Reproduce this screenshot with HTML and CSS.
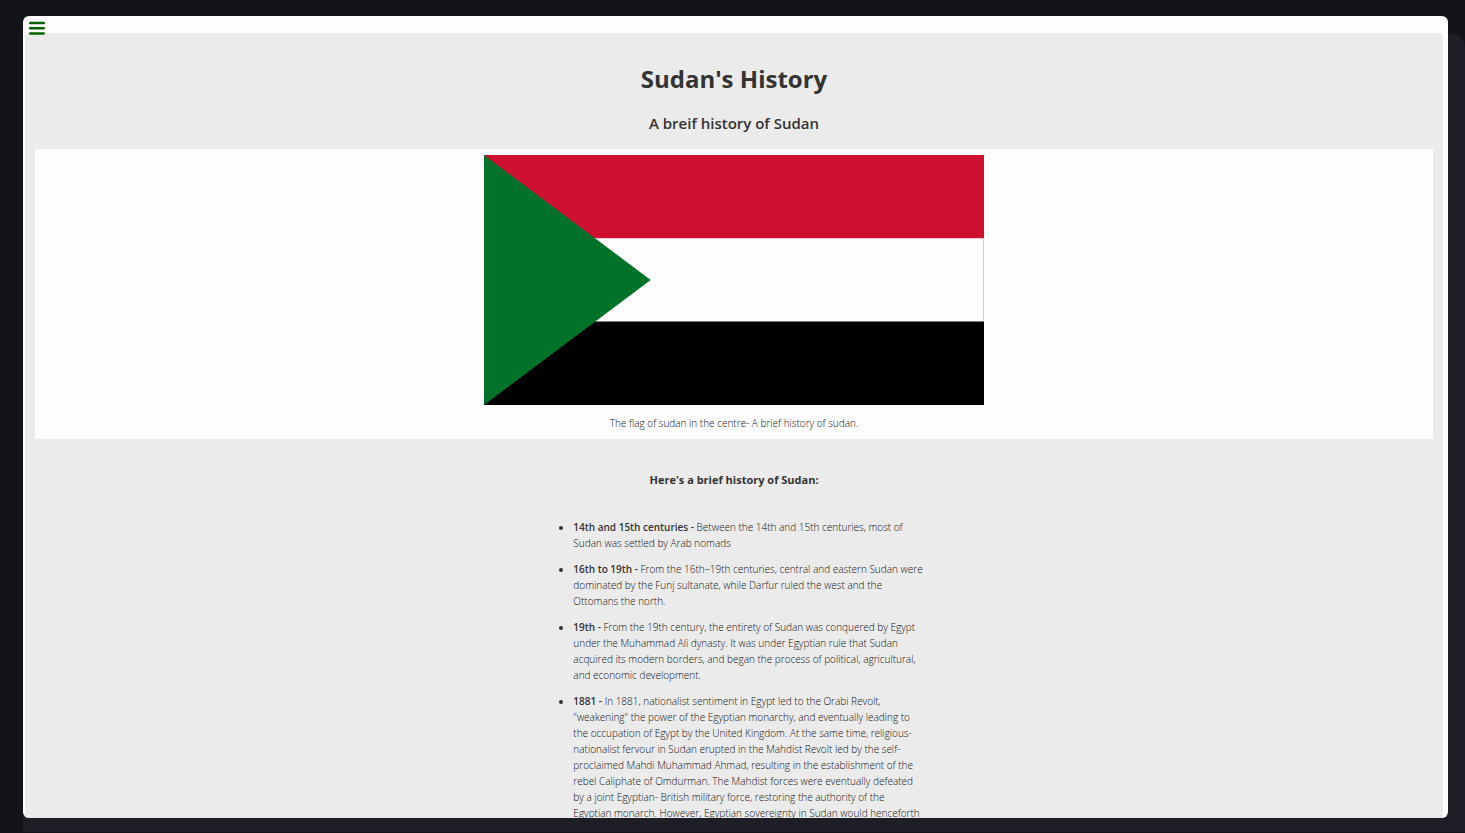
FILE: index.html
```html
<!DOCTYPE html>
<html lang="en">
<head>
<meta charset="utf-8">
<title>Sudan's History</title>
<meta name="viewport" content="width=device-width, initial-scale=1">
<link rel="stylesheet" href="styles.css">
</head>
<body>
<div class="backdrop">
  <div class="window">
    <button class="menu-button" type="button" aria-label="Menu">
      <svg class="menu-icon" viewBox="0 0 16 14" aria-hidden="true">
        <path d="M1.2 2.1h13.6M1.2 7.3h13.6M1.2 12.4h13.6"/>
      </svg>
    </button>
    <main class="page">
      <h1 class="title">Sudan's History</h1>
      <h2 class="subtitle">A breif history of Sudan</h2>
      <figure class="figure">
        <svg class="flag" viewBox="0 0 500 250" role="img" aria-label="Flag of Sudan">
          <path fill="#d01030" d="M0 0h500v83.5H0z"/>
          <path fill="#fdfdfd" d="M0 83.5h500v83H0z"/>
          <path fill="#cfcfcf" d="M499 84h1v82h-1z"/>
          <path fill="#000" d="M0 166.5h500V250H0z"/>
          <path fill="#007229" d="M0 0l166.7 125L0 250z"/>
        </svg>
        <figcaption class="caption">The flag of sudan in the centre- A brief history of sudan.</figcaption>
      </figure>
      <h3 class="heading">Here's a brief history of Sudan:</h3>
      <ul class="timeline">
        <li><strong>14th and 15th centuries -</strong> Between the 14th and 15th centuries, most of<br>Sudan was settled by Arab nomads</li>
        <li><strong>16th to 19th -</strong> From the 16th–19th centuries, central and eastern Sudan were<br>dominated by the Funj sultanate, while Darfur ruled the west and the<br>Ottomans the north.</li>
        <li><strong>19th -</strong> From the 19th century, the entirety of Sudan was conquered by Egypt<br>under the Muhammad Ali dynasty. It was under Egyptian rule that Sudan<br>acquired its modern borders, and began the process of political, agricultural,<br>and economic development.</li>
        <li><strong>1881 -</strong> In 1881, nationalist sentiment in Egypt led to the Orabi Revolt,<br>"weakening" the power of the Egyptian monarchy, and eventually leading to<br>the occupation of Egypt by the United Kingdom. At the same time, religious-<br>nationalist fervour in Sudan erupted in the Mahdist Revolt led by the self-<br>proclaimed Mahdi Muhammad Ahmad, resulting in the establishment of the<br>rebel Caliphate of Omdurman. The Mahdist forces were eventually defeated<br>by a joint Egyptian- British military force, restoring the authority of the<br>Egyptian monarch. However, Egyptian sovereignty in Sudan would henceforth</li>
      </ul>
    </main>
  </div>
</div>
</body>
</html>
```
FILE: styles.css
```css
* {
  box-sizing: border-box;
}

body {
  margin: 0;
  height: 100vh;
  padding: 34px 0 1px 23px;
  background: #131418;
  color: #111;
  font-family: "Open Sans", "Noto Sans", sans-serif;
  font-size: 10px;
  font-weight: 300;
  line-height: 16px;
  overflow: hidden;
}

.backdrop {
  display: flex;
  height: 100%;
  padding: 0 17px 14px 0;
  background: #1e1e27;
  border-radius: 0 14px 0 0;
}

.window {
  display: flex;
  flex: 1;
  flex-direction: column;
  position: relative;
  margin-top: -18px;
  padding: 17px 5px 0 2px;
  background: #fdfdfd;
  border-radius: 6px;
  overflow: hidden;
}

.menu-button {
  position: absolute;
  top: 5px;
  left: 6px;
  display: flex;
  padding: 0;
  border: 0;
  background: none;
}

.menu-icon {
  width: 16px;
  height: 14px;
  fill: none;
  stroke: #006400;
  stroke-width: 2.5;
  stroke-linecap: round;
}

.page {
  flex: 1;
  min-height: 0;
  padding: 26px 10px 0;
  background: #ebebeb;
  border-radius: 4px 4px 0 0;
  text-align: center;
  overflow: hidden;
}

.title,
.subtitle,
.heading,
.timeline strong {
  color: #333;
  font-weight: 600;
}

.title {
  margin: 0 0 12px;
  font-size: 24px;
  font-weight: 700;
  line-height: 40px;
}

.subtitle {
  margin: 0 0 14px;
  font-size: 15px;
  line-height: 24px;
}

.figure {
  margin: 0;
  padding: 6px 0 8px;
  background: #fdfdfd;
}

.flag {
  display: block;
  width: 500px;
  max-width: 100%;
  margin: 0 auto 10px;
}

.caption {
  line-height: 16px;
}

.heading {
  margin: 31px 0 29px;
  font-size: 11px;
  font-weight: 700;
  line-height: 20px;
}

.timeline {
  width: fit-content;
  margin: 0 auto;
  padding-left: 28px;
  text-align: left;
  white-space: nowrap;
}

.timeline li {
  margin-bottom: 10px;
}

.timeline li::marker {
  color: #333;
}
```
